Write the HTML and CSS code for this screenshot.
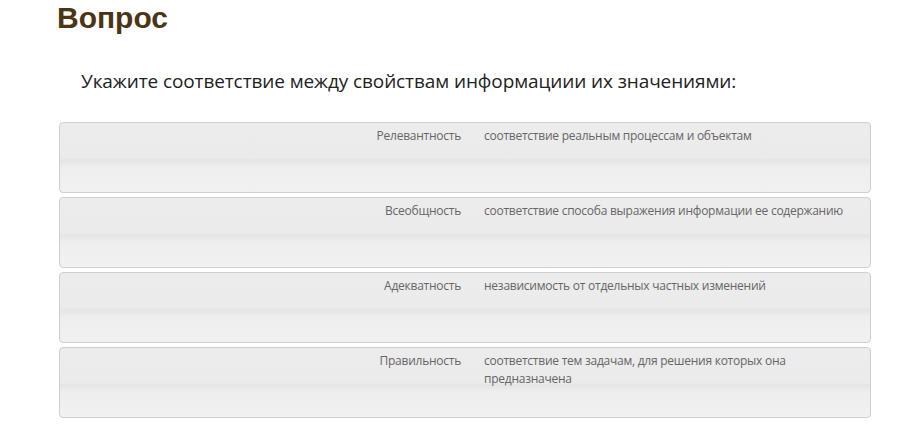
FILE: index.html
```html
<!DOCTYPE html>
<html lang="ru">
<head>
  <meta charset="UTF-8" />
  <title>Вопрос</title>
  <link rel="stylesheet" href="styles.css">
</head>
<body>
  <h1 class="title">Вопрос</h1>

  <p class="question">Укажите соответствие между свойствам информациии их значениями:</p>

  <div class="rows">
    <div class="row">
      <span class="label">Релевантность</span>
      <span class="value">соответствие реальным процессам и объектам</span>
    </div>
    <div class="row">
      <span class="label">Всеобщность</span>
      <span class="value">соответствие способа выражения информации ее содержанию</span>
    </div>
    <div class="row">
      <span class="label">Адекватность</span>
      <span class="value">независимость от отдельных частных изменений</span>
    </div>
    <div class="row">
      <span class="label">Правильность</span>
      <span class="value">соответствие тем задачам, для решения которых она предназначена</span>
    </div>
  </div>
</body>
</html>
```

FILE: styles.css
```css
* {
  box-sizing: border-box;
}

body {
  margin: 0;
  padding: 0;
  font-family: 'Open Sans', 'Liberation Sans', sans-serif;
  background-color: #fff;
  color: #333;
}

.title {
  margin: 0;
  padding-left: 57px;
  font-family: 'Liberation Sans', Arial, sans-serif;
  font-size: 30px;
  line-height: 36px;
  font-weight: bold;
  color: #4b3515;
}

.question {
  margin: 31px 0 27px 81px;
  font-size: 19px;
  line-height: 28px;
  letter-spacing: -0.1px;
  color: #222;
}

.rows {
  width: 812px;
  margin-left: 59px;
}

.row {
  display: grid;
  grid-template-columns: 1fr 1fr;
  height: 71px;
  margin-bottom: 4px;
  border: 1px solid #cfcfcf;
  border-radius: 4px;
  background: linear-gradient(#ececec 0%, #ebebeb 50%, #e5e5e5 54%, #eeeeee 64%, #f1f1f1 100%);
  font-size: 12px;
  line-height: 18px;
  letter-spacing: -0.25px;
  color: #666;
}

.label {
  padding: 4px 4px 0 0;
  text-align: right;
}

.value {
  padding: 4px 8px 0 19px;
}
```
